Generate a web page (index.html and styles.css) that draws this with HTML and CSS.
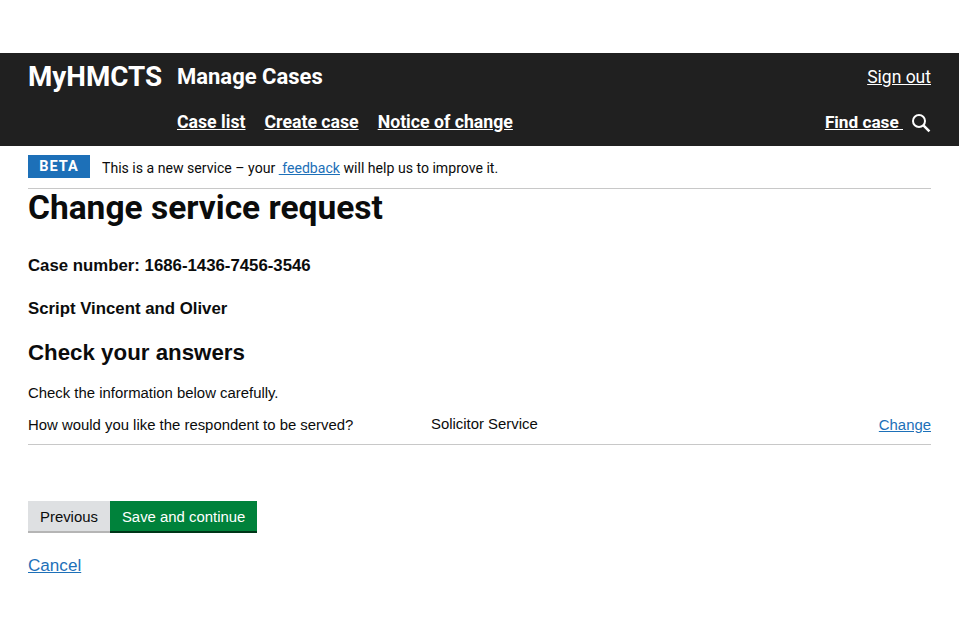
FILE: index.html
```html
<!DOCTYPE html>
<html lang="en">
<head>
<meta charset="utf-8">
<title>Change service request</title>
<link rel="stylesheet" href="styles.css">
</head>
<body>
<header class="site-header">
  <div class="header-row header-top">
    <a class="brand" href="#">MyHMCTS</a>
    <a class="service" href="#">Manage Cases</a>
    <a class="signout" href="#">Sign out</a>
  </div>
  <div class="header-row header-nav">
    <nav class="nav-links">
      <a href="#">Case list</a>
      <a href="#">Create case</a>
      <a href="#">Notice of change</a>
    </nav>
    <a class="find" href="#">Find case&nbsp;</a>
    <svg class="search-icon" width="20" height="20" viewBox="0 0 20 20" aria-hidden="true">
      <circle cx="8" cy="8" r="6" fill="none" stroke="#fff" stroke-width="2"/>
      <path d="M12.4 12.4 L18.4 18.4" stroke="#fff" stroke-width="2.6" fill="none"/>
    </svg>
  </div>
</header>
<main class="page">
  <div class="phase">
    <strong class="tag">BETA</strong>
    <span class="phase-text">This is a new service – your <a href="#">&nbsp;feedback</a> will help us to improve it.</span>
  </div>
  <h1 class="title">Change service request</h1>
  <p class="case-line case-number">Case number: 1686-1436-7456-3546</p>
  <p class="case-line case-name">Script Vincent and Oliver</p>
  <h2 class="subtitle">Check your answers</h2>
  <p class="hint">Check the information below carefully.</p>
  <div class="answer">
    <div class="answer-q">How would you like the respondent to be served?</div>
    <div class="answer-a">Solicitor Service</div>
    <a class="answer-change" href="#">Change</a>
  </div>
  <div class="buttons">
    <button class="btn btn-prev" type="button">Previous</button>
    <button class="btn btn-save" type="button">Save and continue</button>
  </div>
  <a class="cancel" href="#">Cancel</a>
</main>
</body>
</html>
```
FILE: styles.css
```css
* { box-sizing: border-box; }
html, body { margin: 0; padding: 0; background: #fff; }
body { width: 960px; height: 640px; overflow: hidden; padding-top: 53px; font-family: "Liberation Sans", Arial, sans-serif; color: #0b0c0c; }
.site-header { background: #202020; height: 93px; margin-right: 1px; padding: 0 28px; font-family: Roboto, "Noto Sans", sans-serif; color: #fff; font-weight: 700; }
.site-header a { color: #fff; }
.header-row { display: flex; }
.header-top { height: 47px; align-items: center; }
.brand { font-size: 27.8px; text-decoration: none; width: 149px; }
.service { font-size: 22px; text-decoration: none; }
.signout { margin-left: auto; font-size: 17.5px; font-weight: 400; }
.header-nav { height: 44px; align-items: center; padding-left: 149px; }
.nav-links { display: flex; gap: 19px; font-size: 17.7px; }
.find { margin-left: auto; font-size: 17.2px; }
.search-icon { margin-left: 8px; margin-top: 2px; }
.page { padding: 0 29px 0 28px; }
.phase { display: flex; align-items: center; height: 43px; border-bottom: 1px solid #c8c8c8; padding-bottom: 1px; font-family: Roboto, "Noto Sans", sans-serif; }
.tag { background: #1d70b8; color: #fff; font-size: 14.5px; letter-spacing: 1px; width: 62px; height: 23px; display: flex; align-items: center; justify-content: center; font-weight: 700; }
.phase-text { margin-left: 12px; margin-top: 2px; font-size: 14.1px; color: #0b0c0c; }
.phase-text a { color: #1d70b8; }
.title { margin: 0; font-family: Roboto, "Noto Sans", sans-serif; font-size: 33.5px; line-height: 38px; font-weight: 700; }
.case-line { margin: 0; font-size: 16.8px; font-weight: 700; line-height: 20px; }
.case-number { margin-top: 29px; }
.case-name { margin-top: 23px; }
.subtitle { margin: 21px 0 0; font-size: 22.3px; line-height: 26px; font-weight: 700; }
.hint { margin: 17px 0 0; font-size: 14.9px; line-height: 20px; }
.answer { display: flex; margin-top: 12px; height: 30px; border-bottom: 1px solid #c8c8c8; font-size: 14.9px; line-height: 20px; }
.answer-q { width: 403px; }
.answer-a { margin-top: -1px; }
.answer-change { margin-left: auto; color: #1d70b8; }
.buttons { display: flex; margin-top: 56px; }
.btn { border: 0; height: 30px; padding: 2px 12px 0; font-family: "Liberation Sans", Arial, sans-serif; font-size: 14.9px; }
.btn-prev { background: #dee0e2; color: #0b0c0c; box-shadow: 0 2px 0 #b5b5b5; }
.btn-save { background: #00823b; color: #fff; box-shadow: 0 2px 0 #003618; }
.cancel { display: inline-block; margin-top: 25px; font-size: 17.1px; line-height: 20px; color: #1d70b8; }
```
